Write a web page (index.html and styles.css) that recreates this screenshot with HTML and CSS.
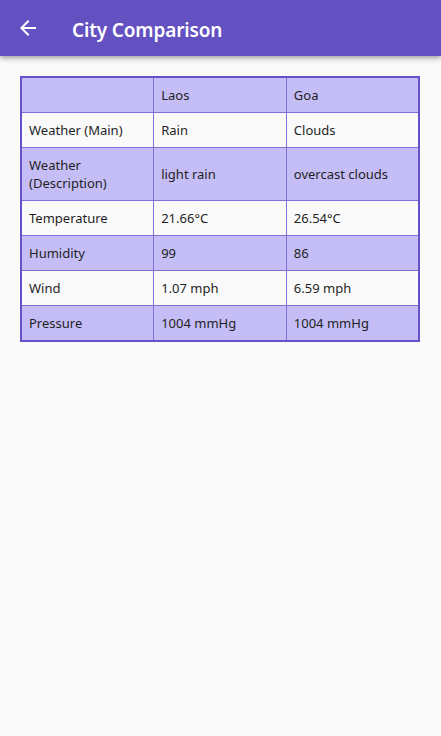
FILE: index.html
```html
<!DOCTYPE html>
<html>
<head>
<meta charset="utf-8">
<link rel="stylesheet" href="styles.css">
</head>
<body>
<header class="appbar">
  <button class="back" aria-label="Back">
    <svg width="24" height="24" viewBox="0 0 24 24"><path d="M20 11H7.83l5.59-5.59L12 4l-8 8 8 8 1.41-1.41L7.83 13H20v-2z" fill="#fff"/></svg>
  </button>
  <h1 class="title">City Comparison</h1>
</header>
<main class="content">
  <table class="cmp">
    <colgroup><col><col><col></colgroup>
    <tbody>
      <tr class="alt"><td></td><td>Laos</td><td>Goa</td></tr>
      <tr><td>Weather (Main)</td><td>Rain</td><td>Clouds</td></tr>
      <tr class="alt"><td>Weather<br>(Description)</td><td>light rain</td><td>overcast clouds</td></tr>
      <tr><td>Temperature</td><td>21.66°C</td><td>26.54°C</td></tr>
      <tr class="alt"><td>Humidity</td><td>99</td><td>86</td></tr>
      <tr><td>Wind</td><td>1.07 mph</td><td>6.59 mph</td></tr>
      <tr class="alt"><td>Pressure</td><td>1004 mmHg</td><td>1004 mmHg</td></tr>
    </tbody>
  </table>
</main>
</body>
</html>
```
FILE: styles.css
```css
* { box-sizing: border-box; }
html, body { margin: 0; padding: 0; }
body {
  background: #fafafa;
  font-family: "Noto Sans", "Open Sans", sans-serif;
  color: #1f1f1f;
  width: 441px;
  height: 736px;
  overflow: hidden;
}
.appbar {
  height: 56px;
  background: #6351c1;
  display: flex;
  align-items: center;
  box-shadow: 0 2px 4px rgba(0,0,0,0.25), 0 4px 6px rgba(0,0,0,0.1);
  position: relative;
}
.back {
  width: 56px;
  height: 56px;
  border: 0;
  background: none;
  padding: 0 0 0 16px;
  display: flex;
  align-items: center;
  justify-content: flex-start;
}
.title {
  margin: 0 0 0 16px;
  padding-top: 3px;
  font-size: 19px;
  font-weight: 600;
  color: #fff;
  letter-spacing: -0.15px;
}
.content {
  padding: 20px 20px;
}
.cmp {
  width: 400px;
  table-layout: fixed;
  border-collapse: collapse;
  border: 2px solid #6352c8;
  font-size: 13px;
  line-height: 18px;
}
.cmp td {
  border: 1px solid #7f70d8;
  padding: 8px 7px;
  height: 34px;
  vertical-align: middle;
  background: #fafafa;
}
.cmp tr.alt td { background: #c5bef6; }
```
